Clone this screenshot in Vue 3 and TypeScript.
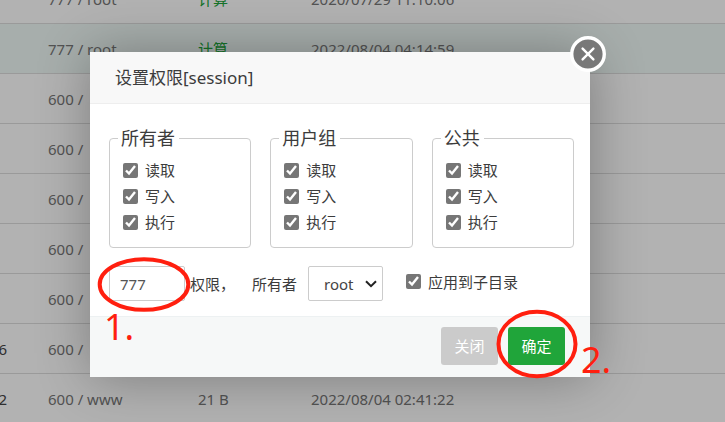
<script setup lang="ts">
import { reactive, ref } from 'vue'

interface FileRow {
  name: string
  owner: string
  size: string
  time: string
  computable?: boolean
  active?: boolean
}

const rows: FileRow[] = [
  { name: '', owner: '777 / root', size: '计算', time: '2020/07/29 11:10:06', computable: true },
  { name: '', owner: '777 / root', size: '计算', time: '2022/08/04 04:14:59', computable: true, active: true },
  { name: '', owner: '600 /', size: '', time: '' },
  { name: '', owner: '600 /', size: '', time: '' },
  { name: '', owner: '600 /', size: '', time: '' },
  { name: '', owner: '600 /', size: '', time: '' },
  { name: '', owner: '600 /', size: '', time: '' },
  { name: '6', owner: '600 /', size: '', time: '' },
  { name: '2', owner: '600 / www', size: '21 B', time: '2022/08/04 02:41:22' },
]

const groups = reactive([
  { title: '所有者', read: true, write: true, exec: true },
  { title: '用户组', read: true, write: true, exec: true },
  { title: '公共', read: true, write: true, exec: true },
])

const mode = ref('777')
const owner = ref('root')
const recursive = ref(true)
</script>

<template>
  <div class="page">
    <table class="files">
      <colgroup>
        <col class="c-name" />
        <col class="c-owner" />
        <col class="c-size" />
        <col />
      </colgroup>
      <tbody>
        <tr v-for="(row, i) in rows" :key="i" :class="{ active: row.active }">
          <td class="name">{{ row.name }}</td>
          <td>{{ row.owner }}</td>
          <td>
            <a v-if="row.computable" href="#">{{ row.size }}</a>
            <template v-else>{{ row.size }}</template>
          </td>
          <td>{{ row.time }}</td>
        </tr>
      </tbody>
    </table>

    <div class="shade">
      <form class="dialog" role="dialog" aria-labelledby="dialog-title" @submit.prevent>
        <h2 id="dialog-title" class="title">设置权限[session]</h2>
        <div class="body">
          <div class="groups">
            <fieldset v-for="group in groups" :key="group.title">
              <legend>{{ group.title }}</legend>
              <label class="check"><input v-model="group.read" type="checkbox" />读取</label>
              <label class="check"><input v-model="group.write" type="checkbox" />写入</label>
              <label class="check"><input v-model="group.exec" type="checkbox" />执行</label>
            </fieldset>
          </div>
          <div class="line">
            <input id="mode" v-model="mode" class="mode" type="text" />
            <label for="mode" class="mode-label">权限，</label>
            <label for="owner" class="owner-label">所有者</label>
            <span class="select">
              <select id="owner" v-model="owner">
                <option>root</option>
                <option>www</option>
              </select>
              <svg viewBox="0 0 12 8" aria-hidden="true"><path d="M1 1.2 6 6.2 11 1.2" /></svg>
            </span>
            <label class="check sub"><input v-model="recursive" type="checkbox" />应用到子目录</label>
          </div>
        </div>
        <div class="footer">
          <button type="button" class="cancel">关闭</button>
          <button type="submit" class="ok">确定</button>
        </div>
        <button type="button" class="close" aria-label="×">
          <svg viewBox="0 0 36 36" aria-hidden="true">
            <circle cx="18" cy="18" r="16.3" />
            <path d="M12.6 12.6 23.4 23.4M23.4 12.6 12.6 23.4" />
          </svg>
        </button>
        <svg class="marks" viewBox="0 0 530 330" aria-hidden="true">
          <ellipse cx="54" cy="232.5" rx="44.3" ry="25.3" />
          <ellipse cx="447" cy="292" rx="38.5" ry="32.3" />
          <text x="14" y="288">1.</text>
          <text x="491" y="321">2.</text>
        </svg>
      </form>
    </div>
  </div>
</template>

<style>
body {
  background: #fff;
}
</style>

<style scoped>
* {
  box-sizing: border-box;
}

.page {
  position: relative;
  height: 100vh;
  overflow: hidden;
  font: 15px/24px 'Noto Sans', 'Noto Sans CJK SC', sans-serif;
  color: #3c3c3c;
}

.files {
  width: 100%;
  margin-top: -26px;
  table-layout: fixed;
  border-collapse: separate;
  border-spacing: 0;
  color: #777;
}

.c-name {
  width: 48px;
}

.c-owner {
  width: 150px;
}

.c-size {
  width: 113px;
}

.files td {
  height: 50px;
  padding: 0;
  border-bottom: 1px solid #ddd;
  white-space: nowrap;
}

.files td.name {
  padding-right: 41px;
  direction: rtl;
  color: #444;
}

.files .active td {
  background: #f0faf7;
}

.files a {
  color: #20a53a;
  text-decoration: none;
}

.shade {
  position: absolute;
  inset: 0;
  padding: 52px 135px 0 90px;
  background: rgba(0, 0, 0, 0.3);
}

.dialog {
  position: relative;
  max-width: 500px;
  margin: 0 auto;
  background: #fff;
  box-shadow: 1px 1px 50px rgba(0, 0, 0, 0.3);
}

.title {
  margin: 0;
  padding: 0 25px;
  border-bottom: 1px solid #eee;
  background: #f8f8f8;
  font-size: 17px;
  font-weight: 400;
  line-height: 51px;
}

.body {
  padding: 22px 16px 15px 19px;
}

.groups {
  display: grid;
  grid-template-columns: repeat(3, 1fr);
  gap: 19px;
}

fieldset {
  min-width: 0;
  margin: 0;
  padding: 7px 13px 12px;
  border: 1px solid #ccc;
  border-radius: 4px;
}

legend {
  margin-left: -5px;
  padding: 0 4px 0 3px;
  font-size: 18px;
  line-height: 24px;
}

.check {
  display: flex;
  align-items: center;
  gap: 7px;
  line-height: 26px;
  white-space: nowrap;
}

.check input {
  width: 15px;
  height: 15px;
  margin: 0;
  accent-color: #767676;
}

.line {
  display: flex;
  align-items: center;
  margin-top: 18px;
}

.mode {
  width: 76px;
  height: 35px;
  padding: 0 10px;
  border: 1px solid #ccc;
  border-radius: 2px;
  background: #fff;
  color: #555;
  font: inherit;
}

.mode-label {
  width: 62px;
  margin-left: 5px;
}

.owner-label {
  margin-right: 11px;
}

.select {
  display: grid;
  align-items: center;
}

.select > * {
  grid-area: 1 / 1;
}

.select select {
  width: 75px;
  height: 35px;
  padding: 0 15px;
  border: 1px solid #ccc;
  border-radius: 2px;
  background: #fff;
  color: #444;
  font: inherit;
  appearance: none;
}

.select svg {
  justify-self: end;
  width: 12px;
  height: 8px;
  margin-right: 6px;
  fill: none;
  stroke: #222;
  stroke-width: 2;
  pointer-events: none;
}

.sub {
  margin-left: 23px;
  padding-bottom: 4px;
}

.footer {
  display: flex;
  justify-content: flex-end;
  gap: 10px;
  padding: 10px 25px 12px;
  border-top: 1px solid #edf1f2;
  background: #f6f8f8;
}

.footer button {
  width: 57px;
  height: 38px;
  padding: 0;
  border: 0;
  border-radius: 3px;
  color: #fff;
  font: inherit;
}

.footer .cancel {
  background: #cbcbcb;
}

.footer .ok {
  background: #20a53a;
}

.close {
  position: absolute;
  top: -16px;
  right: -16px;
  width: 36px;
  height: 36px;
  padding: 0;
  border: 0;
  background: none;
}

.close svg {
  display: block;
}

.close circle {
  fill: #787878;
  stroke: #fff;
  stroke-width: 3.4;
}

.close path {
  stroke: #fff;
  stroke-width: 2.4;
  stroke-linecap: round;
}

.marks {
  position: absolute;
  top: 0;
  left: 0;
  width: 530px;
  height: 330px;
  overflow: visible;
  pointer-events: none;
}

.marks ellipse {
  fill: none;
  stroke: #ff1f0f;
  stroke-width: 4;
}

.marks text {
  fill: #ff1f0f;
  font-size: 36px;
}
</style>
